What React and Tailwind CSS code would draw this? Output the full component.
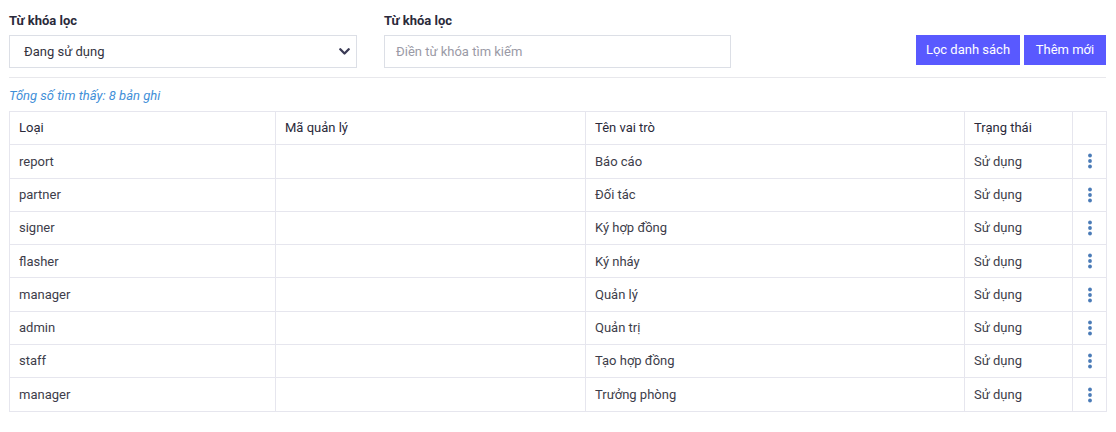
import React from "react";

const rows = [
  ["report", "", "Báo cáo", "Sử dụng"],
  ["partner", "", "Đối tác", "Sử dụng"],
  ["signer", "", "Ký hợp đồng", "Sử dụng"],
  ["flasher", "", "Ký nháy", "Sử dụng"],
  ["manager", "", "Quản lý", "Sử dụng"],
  ["admin", "", "Quản trị", "Sử dụng"],
  ["staff", "", "Tạo hợp đồng", "Sử dụng"],
  ["manager", "", "Trưởng phòng", "Sử dụng"],
];

function Dots() {
  return (
    <svg width="6" height="16" viewBox="0 0 6 16" className="mx-auto block">
      <circle cx="3" cy="2.5" r="1.9" fill="#4a7bb7" />
      <circle cx="3" cy="8" r="1.9" fill="#4a7bb7" />
      <circle cx="3" cy="13.5" r="1.9" fill="#4a7bb7" />
    </svg>
  );
}

export default function App() {
  const cell = "border border-[#e6e6ee] px-[9px] h-[33.3px] align-middle";
  return (
    <div
      className="bg-white w-[1116px] h-[432px] pl-[9px] pr-[10px] pt-[12px] text-[13px] text-[#3d3d4a]"
      style={{ fontFamily: "Roboto, 'Noto Sans', sans-serif" }}
    >
      <div className="flex items-start">
        <div className="w-[348px]">
          <div className="font-bold text-[#2a2a3a] leading-[18px] mb-[5px]">Từ khóa lọc</div>
          <div className="h-[33px] border border-[#dcdfe6] flex items-center pl-[14px] pr-[5px]">
            <span className="flex-1 text-[#333340]">Đang sử dụng</span>
            <svg width="11" height="7" viewBox="0 0 11 7" className="mr-[1px]">
              <path d="M1.3 1.3 L5.5 5.5 L9.7 1.3" fill="none" stroke="#3a3a55" strokeWidth="2.3" strokeLinecap="round" strokeLinejoin="round" />
            </svg>
          </div>
        </div>
        <div className="w-[347px] ml-[27px]">
          <div className="font-bold text-[#2a2a3a] leading-[18px] mb-[5px]">Từ khóa lọc</div>
          <div className="h-[33px] border border-[#dcdfe6] flex items-center pl-[11px]">
            <span className="text-[#9a9aa6]">Điền từ khóa tìm kiếm</span>
          </div>
        </div>
        <div className="ml-auto mt-[23px] flex gap-[4px]">
          <button className="h-[30px] w-[104px] bg-[#5959ff] text-white text-[13px]">Lọc danh sách</button>
          <button className="h-[30px] w-[82px] bg-[#5959ff] text-white text-[13px]">Thêm mới</button>
        </div>
      </div>
      <div className="mt-[9px] h-px bg-[#e8e8ec]" />
      <div className="mt-[9px] leading-[18px] italic text-[#3f8fd8]">Tổng số tìm thấy: 8 bản ghi</div>
      <table className="mt-[6px] w-full border-collapse table-fixed">
        <colgroup>
          <col className="w-[266px]" />
          <col className="w-[310px]" />
          <col className="w-[379px]" />
          <col className="w-[108px]" />
          <col className="w-[34px]" />
        </colgroup>
        <thead>
          <tr>
            <th className={`${cell} text-left font-normal text-[#2a2a3a]`}>Loại</th>
            <th className={`${cell} text-left font-normal text-[#2a2a3a]`}>Mã quản lý</th>
            <th className={`${cell} text-left font-normal text-[#2a2a3a]`}>Tên vai trò</th>
            <th className={`${cell} text-left font-normal text-[#2a2a3a]`}>Trạng thái</th>
            <th className={cell}></th>
          </tr>
        </thead>
        <tbody>
          {rows.map((r, i) => (
            <tr key={i}>
              <td className={cell}>{r[0]}</td>
              <td className={cell}>{r[1]}</td>
              <td className={cell}>{r[2]}</td>
              <td className={cell}>{r[3]}</td>
              <td className={`${cell} px-0`}>
                <Dots />
              </td>
            </tr>
          ))}
        </tbody>
      </table>
    </div>
  );
}
